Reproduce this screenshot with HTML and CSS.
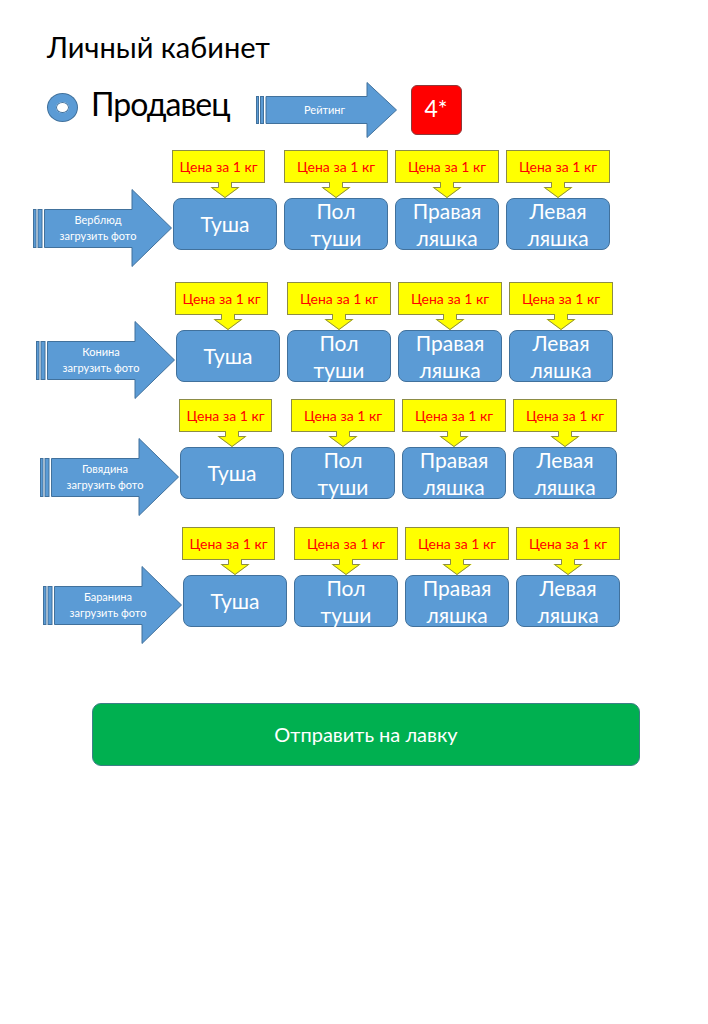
FILE: index.html
```html
<!DOCTYPE html>
<html lang="ru">
<head>
    <meta charset="UTF-8">
    <meta name="viewport" content="width=device-width, initial-scale=1.0">
    <title>Личный кабинет</title>
    <link rel="stylesheet" href="styles.css">
</head>
<body>
<div id="page">
    <h1 class="title">Личный кабинет</h1>

    <div class="seller">
        <span class="seller-dot"></span>
        <span class="seller-name">Продавец</span>
        <div class="rating-arrow">
            <svg class="arrow-shape" width="141" height="56" viewBox="0 0 141 56">
                <rect x="0.5" y="14.5" width="2" height="27"/>
                <rect x="4.5" y="14.5" width="3" height="27"/>
                <polygon points="10,14.5 111,14.5 111,0.5 140.5,28 111,55.5 111,41.5 10,41.5"/>
            </svg>
            <span class="arrow-label rating-label">Рейтинг</span>
        </div>
        <div class="rating-badge">4*</div>
    </div>

    <!-- Верблюд -->
    <div class="cat-row row-camel">
        <div class="cat-arrow">
            <svg class="arrow-shape" width="139" height="78" viewBox="0 0 139 78">
                <rect x="0.5" y="20.5" width="2.5" height="38"/>
                <rect x="5" y="20.5" width="4" height="38"/>
                <polygon points="11.5,20.5 99,20.5 99,0.5 138.5,39 99,77.5 99,58.5 11.5,58.5"/>
            </svg>
            <span class="arrow-label">Верблюд<br>загрузить фото</span>
        </div>
        <div class="cuts">
            <div class="cut">
                <div class="price">Цена за 1 кг</div>
                <svg class="pointer" width="30" height="16" viewBox="0 0 30 16"><polygon class="pointer-fill" points="8,0 22,0 22,5 30,5 15,16 0,5 8,5"/><path class="pointer-line" d="M8.5 0 V5.5 H1.5 L15 15.5 L28.5 5.5 H21.5 V0"/></svg>
                <div class="cut-box">Туша</div>
            </div>
            <div class="cut">
                <div class="price">Цена за 1 кг</div>
                <svg class="pointer" width="30" height="16" viewBox="0 0 30 16"><polygon class="pointer-fill" points="8,0 22,0 22,5 30,5 15,16 0,5 8,5"/><path class="pointer-line" d="M8.5 0 V5.5 H1.5 L15 15.5 L28.5 5.5 H21.5 V0"/></svg>
                <div class="cut-box">Пол<br>туши</div>
            </div>
            <div class="cut">
                <div class="price">Цена за 1 кг</div>
                <svg class="pointer" width="30" height="16" viewBox="0 0 30 16"><polygon class="pointer-fill" points="8,0 22,0 22,5 30,5 15,16 0,5 8,5"/><path class="pointer-line" d="M8.5 0 V5.5 H1.5 L15 15.5 L28.5 5.5 H21.5 V0"/></svg>
                <div class="cut-box">Правая<br>ляшка</div>
            </div>
            <div class="cut">
                <div class="price">Цена за 1 кг</div>
                <svg class="pointer" width="30" height="16" viewBox="0 0 30 16"><polygon class="pointer-fill" points="8,0 22,0 22,5 30,5 15,16 0,5 8,5"/><path class="pointer-line" d="M8.5 0 V5.5 H1.5 L15 15.5 L28.5 5.5 H21.5 V0"/></svg>
                <div class="cut-box">Левая<br>ляшка</div>
            </div>
        </div>
    </div>

    <!-- Конина -->
    <div class="cat-row row-horse">
        <div class="cat-arrow">
            <svg class="arrow-shape" width="139" height="78" viewBox="0 0 139 78">
                <rect x="0.5" y="20.5" width="2.5" height="38"/>
                <rect x="5" y="20.5" width="4" height="38"/>
                <polygon points="11.5,20.5 99,20.5 99,0.5 138.5,39 99,77.5 99,58.5 11.5,58.5"/>
            </svg>
            <span class="arrow-label">Конина<br>загрузить фото</span>
        </div>
        <div class="cuts">
            <div class="cut">
                <div class="price">Цена за 1 кг</div>
                <svg class="pointer" width="30" height="16" viewBox="0 0 30 16"><polygon class="pointer-fill" points="8,0 22,0 22,5 30,5 15,16 0,5 8,5"/><path class="pointer-line" d="M8.5 0 V5.5 H1.5 L15 15.5 L28.5 5.5 H21.5 V0"/></svg>
                <div class="cut-box">Туша</div>
            </div>
            <div class="cut">
                <div class="price">Цена за 1 кг</div>
                <svg class="pointer" width="30" height="16" viewBox="0 0 30 16"><polygon class="pointer-fill" points="8,0 22,0 22,5 30,5 15,16 0,5 8,5"/><path class="pointer-line" d="M8.5 0 V5.5 H1.5 L15 15.5 L28.5 5.5 H21.5 V0"/></svg>
                <div class="cut-box">Пол<br>туши</div>
            </div>
            <div class="cut">
                <div class="price">Цена за 1 кг</div>
                <svg class="pointer" width="30" height="16" viewBox="0 0 30 16"><polygon class="pointer-fill" points="8,0 22,0 22,5 30,5 15,16 0,5 8,5"/><path class="pointer-line" d="M8.5 0 V5.5 H1.5 L15 15.5 L28.5 5.5 H21.5 V0"/></svg>
                <div class="cut-box">Правая<br>ляшка</div>
            </div>
            <div class="cut">
                <div class="price">Цена за 1 кг</div>
                <svg class="pointer" width="30" height="16" viewBox="0 0 30 16"><polygon class="pointer-fill" points="8,0 22,0 22,5 30,5 15,16 0,5 8,5"/><path class="pointer-line" d="M8.5 0 V5.5 H1.5 L15 15.5 L28.5 5.5 H21.5 V0"/></svg>
                <div class="cut-box">Левая<br>ляшка</div>
            </div>
        </div>
    </div>

    <!-- Говядина -->
    <div class="cat-row row-beef">
        <div class="cat-arrow">
            <svg class="arrow-shape" width="139" height="78" viewBox="0 0 139 78">
                <rect x="0.5" y="20.5" width="2.5" height="38"/>
                <rect x="5" y="20.5" width="4" height="38"/>
                <polygon points="11.5,20.5 99,20.5 99,0.5 138.5,39 99,77.5 99,58.5 11.5,58.5"/>
            </svg>
            <span class="arrow-label">Говядина<br>загрузить фото</span>
        </div>
        <div class="cuts">
            <div class="cut">
                <div class="price">Цена за 1 кг</div>
                <svg class="pointer" width="30" height="16" viewBox="0 0 30 16"><polygon class="pointer-fill" points="8,0 22,0 22,5 30,5 15,16 0,5 8,5"/><path class="pointer-line" d="M8.5 0 V5.5 H1.5 L15 15.5 L28.5 5.5 H21.5 V0"/></svg>
                <div class="cut-box">Туша</div>
            </div>
            <div class="cut">
                <div class="price">Цена за 1 кг</div>
                <svg class="pointer" width="30" height="16" viewBox="0 0 30 16"><polygon class="pointer-fill" points="8,0 22,0 22,5 30,5 15,16 0,5 8,5"/><path class="pointer-line" d="M8.5 0 V5.5 H1.5 L15 15.5 L28.5 5.5 H21.5 V0"/></svg>
                <div class="cut-box">Пол<br>туши</div>
            </div>
            <div class="cut">
                <div class="price">Цена за 1 кг</div>
                <svg class="pointer" width="30" height="16" viewBox="0 0 30 16"><polygon class="pointer-fill" points="8,0 22,0 22,5 30,5 15,16 0,5 8,5"/><path class="pointer-line" d="M8.5 0 V5.5 H1.5 L15 15.5 L28.5 5.5 H21.5 V0"/></svg>
                <div class="cut-box">Правая<br>ляшка</div>
            </div>
            <div class="cut">
                <div class="price">Цена за 1 кг</div>
                <svg class="pointer" width="30" height="16" viewBox="0 0 30 16"><polygon class="pointer-fill" points="8,0 22,0 22,5 30,5 15,16 0,5 8,5"/><path class="pointer-line" d="M8.5 0 V5.5 H1.5 L15 15.5 L28.5 5.5 H21.5 V0"/></svg>
                <div class="cut-box">Левая<br>ляшка</div>
            </div>
        </div>
    </div>

    <!-- Баранина -->
    <div class="cat-row row-lamb">
        <div class="cat-arrow">
            <svg class="arrow-shape" width="139" height="78" viewBox="0 0 139 78">
                <rect x="0.5" y="20.5" width="2.5" height="38"/>
                <rect x="5" y="20.5" width="4" height="38"/>
                <polygon points="11.5,20.5 99,20.5 99,0.5 138.5,39 99,77.5 99,58.5 11.5,58.5"/>
            </svg>
            <span class="arrow-label">Баранина<br>загрузить фото</span>
        </div>
        <div class="cuts">
            <div class="cut">
                <div class="price">Цена за 1 кг</div>
                <svg class="pointer" width="30" height="16" viewBox="0 0 30 16"><polygon class="pointer-fill" points="8,0 22,0 22,5 30,5 15,16 0,5 8,5"/><path class="pointer-line" d="M8.5 0 V5.5 H1.5 L15 15.5 L28.5 5.5 H21.5 V0"/></svg>
                <div class="cut-box">Туша</div>
            </div>
            <div class="cut">
                <div class="price">Цена за 1 кг</div>
                <svg class="pointer" width="30" height="16" viewBox="0 0 30 16"><polygon class="pointer-fill" points="8,0 22,0 22,5 30,5 15,16 0,5 8,5"/><path class="pointer-line" d="M8.5 0 V5.5 H1.5 L15 15.5 L28.5 5.5 H21.5 V0"/></svg>
                <div class="cut-box">Пол<br>туши</div>
            </div>
            <div class="cut">
                <div class="price">Цена за 1 кг</div>
                <svg class="pointer" width="30" height="16" viewBox="0 0 30 16"><polygon class="pointer-fill" points="8,0 22,0 22,5 30,5 15,16 0,5 8,5"/><path class="pointer-line" d="M8.5 0 V5.5 H1.5 L15 15.5 L28.5 5.5 H21.5 V0"/></svg>
                <div class="cut-box">Правая<br>ляшка</div>
            </div>
            <div class="cut">
                <div class="price">Цена за 1 кг</div>
                <svg class="pointer" width="30" height="16" viewBox="0 0 30 16"><polygon class="pointer-fill" points="8,0 22,0 22,5 30,5 15,16 0,5 8,5"/><path class="pointer-line" d="M8.5 0 V5.5 H1.5 L15 15.5 L28.5 5.5 H21.5 V0"/></svg>
                <div class="cut-box">Левая<br>ляшка</div>
            </div>
        </div>
    </div>

    <div class="send">Отправить на лавку</div>
</div>
</body>
</html>
```

FILE: styles.css
```css
body {
    margin: 0px;
    background-color: #ffffff;
    font-family: Lato, "Open Sans", sans-serif;
    color: #000000;
}
#page {
    padding: 30px 0 0 33px;
}
.title {
    margin: 0 0 0 14px;
    font-size: 29px;
    font-weight: 400;
    line-height: 1.2;
}

/* seller line */
.seller {
    display: flex;
    align-items: center;
    height: 56px;
    margin-top: 17px;
}
.seller-dot {
    box-sizing: border-box;
    width: 29px;
    height: 27px;
    margin: 0 0 4px 15px;
    border-radius: 50%;
    border: 8px solid #5b9bd5;
    background-color: #ffffff;
    box-shadow: 0 0 0 1px #41719c, inset 0 0 0 1px #41719c;
}
.seller-name {
    margin: 0 0 12px 14px;
    font-size: 32px;
    letter-spacing: -1px;
    line-height: 1.2;
}
.rating-arrow {
    position: relative;
    width: 141px;
    height: 56px;
    margin-left: 26px;
}
.rating-badge {
    box-sizing: border-box;
    width: 51px;
    height: 50px;
    margin-left: 14px;
    display: flex;
    align-items: center;
    justify-content: center;
    padding-bottom: 3px;
    background-color: #ff0000;
    border: 1px solid #8c3a3a;
    border-radius: 6px;
    color: #ffffff;
    font-size: 23px;
}

/* blue striped arrows */
.arrow-shape {
    display: block;
}
.arrow-shape rect,
.arrow-shape polygon {
    fill: #5b9bd5;
    stroke: #41719c;
    stroke-width: 1;
}
.arrow-label {
    position: absolute;
    inset: 0;
    display: flex;
    align-items: center;
    justify-content: center;
    padding-right: 9px;
    text-align: center;
    color: #ffffff;
    font-size: 11px;
    line-height: 16px;
}
.rating-label {
    padding-right: 3px;
}

/* category rows, each sits a little further right as on the slide */
.cat-row {
    display: flex;
    align-items: flex-start;
}
.row-camel { margin-top: 12px; }
.row-horse { margin-top: 15px; margin-left: 3px; }
.row-beef { margin-top: 0px; margin-left: 7px; }
.row-lamb { margin-top: 11px; margin-left: 10px; }
.cat-arrow {
    position: relative;
    flex: none;
    width: 139px;
    height: 78px;
    margin-top: 39px;
}
.cuts {
    display: flex;
    gap: 7px;
    margin-left: 1px;
}
.cut {
    display: flex;
    flex-direction: column;
    align-items: center;
    width: 104px;
}
.price {
    box-sizing: border-box;
    width: 100%;
    height: 33px;
    display: flex;
    align-items: center;
    justify-content: center;
    background-color: #ffff00;
    border: 1px solid #8c8c46;
    color: #ff0000;
    font-size: 14px;
}
.cut:first-child .price {
    align-self: flex-start;
    width: 93px;
    margin-left: -1px;
}
.pointer {
    display: block;
    margin-top: -1px;
}
.pointer-fill {
    fill: #ffff00;
}
.pointer-line {
    fill: none;
    stroke: #8c8c46;
    stroke-width: 1;
}
.cut-box {
    box-sizing: border-box;
    width: 100%;
    height: 52px;
    display: flex;
    align-items: center;
    justify-content: center;
    text-align: center;
    background-color: #5b9bd5;
    border: 1px solid #41719c;
    border-radius: 8px;
    color: #ffffff;
    font-size: 21px;
    line-height: 27px;
}

/* submit */
.send {
    box-sizing: border-box;
    width: 548px;
    height: 63px;
    margin: 59px 0 0 59px;
    display: flex;
    align-items: center;
    justify-content: center;
    background-color: #00b050;
    border: 1px solid #3d7f86;
    border-radius: 9px;
    color: #ffffff;
    font-size: 20px;
}
```
